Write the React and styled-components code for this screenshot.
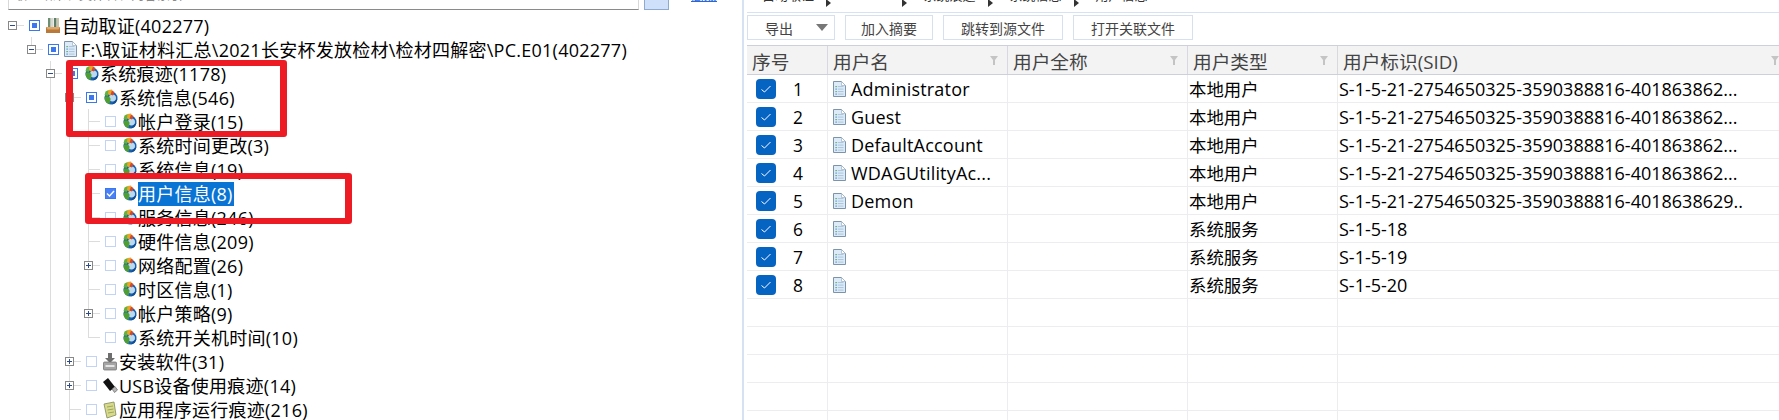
import styled, { createGlobalStyle } from "styled-components";

const GlobalStyle = createGlobalStyle`
  html, body {
    margin: 0;
    padding: 0;
    background: #fff;
    font-family: "Open Sans", "Noto Sans CJK SC", sans-serif;
    color: #000;
  }
`;

const Page = styled.div`
  display: flex;
  width: 1779px;
  height: 420px;
  overflow: hidden;
  position: relative;
`;

const LeftPanel = styled.div`
  width: 742px;
  flex: none;
`;

const SearchBar = styled.div`
  display: flex;
  height: 10px;
  padding-left: 8px;
`;

const SearchInput = styled.div`
  width: 631px;
  height: 10px;
  box-sizing: border-box;
  border-bottom: 1px solid #8a8a8a;
  border-right: 1px solid #d8d8d8;
  border-left: 1px solid #d8d8d8;
  padding-left: 5px;
  overflow: hidden;
  font-size: 13px;
  line-height: 18px;
  color: #8a8a8a;

  span {
    display: block;
    margin-top: -15px;
  }
`;

const SearchButton = styled.div`
  width: 25px;
  height: 10px;
  margin-left: 5px;
  box-sizing: border-box;
  background: #cfe0fa;
  border: 1px solid #8eaacf;
  border-top: 0;
`;

const AdvancedLink = styled.div`
  margin-left: 22px;
  height: 4px;
  overflow: hidden;
  font-size: 13px;
  line-height: 18px;
  color: #2a66d8;
  text-decoration: underline;

  span {
    display: block;
    margin-top: -14px;
  }
`;

const Tree = styled.div`
  padding: 3px 0 0 12px;
`;

const Children = styled.div`
  position: relative;
  margin-left: 19px;

  &::before {
    content: "";
    position: absolute;
    left: 0;
    top: 0;
    width: 1px;
    height: ${(p) => (p.$guide === "full" ? "100%" : p.$guide === "leaf" ? "calc(100% - 12px)" : "12px")};
    background: #dcdcdc;
  }
`;

const Row = styled.div`
  display: flex;
  align-items: center;
  height: 24px;
  font-size: 18px;
  white-space: nowrap;
`;

const Slot = styled.div`
  display: flex;
  align-items: center;
  flex: none;
  width: 21px;
  margin-left: -4px;
`;

const Expander = styled.div`
  position: relative;
  width: 9px;
  height: 9px;
  flex: none;
  box-sizing: border-box;
  border: 1px solid #888;
  background: #fff;
  z-index: 1;

  &::before {
    content: "";
    position: absolute;
    left: 1px;
    top: 3px;
    width: 5px;
    height: 1px;
    background: #2f4a86;
  }

  &::after {
    content: "";
    display: ${(p) => (p.$open ? "none" : "block")};
    position: absolute;
    left: 3px;
    top: 1px;
    width: 1px;
    height: 5px;
    background: #2f4a86;
  }
`;

const Twig = styled.div`
  flex: 1;
  height: 1px;
  margin-left: ${(p) => (p.$bare ? "4px" : "0")};
  margin-right: 5px;
  background: #dcdcdc;
`;

const CheckBox = styled.div`
  display: flex;
  align-items: center;
  justify-content: center;
  flex: none;
  width: 11px;
  height: 11px;
  box-sizing: border-box;
  border: 1px solid ${(p) => (p.$state === "none" ? "#c3d3f5" : "#3b78f0")};
  background: ${(p) => (p.$state === "checked" ? "#4a80f5" : "#fff")};

  &::after {
    content: "";
    display: ${(p) => (p.$state === "partial" ? "block" : "none")};
    width: 5px;
    height: 5px;
    background: #3b78f0;
  }
`;

const NodeIcon = styled.span`
  display: flex;
  flex: none;
  width: 16px;
  height: 16px;
  margin: 0 2px 0 5px;
`;

const Label = styled.span`
  display: block;
  margin-top: 2px;
  margin-left: -1px;
  line-height: 24px;
  padding-right: 1px;
  letter-spacing: 0.25px;
  background: ${(p) => (p.$selected ? "#0a74d4" : "transparent")};
  color: ${(p) => (p.$selected ? "#fff" : "#000")};
`;

const RedBox = styled.div`
  position: absolute;
  left: ${(p) => p.$left}px;
  top: ${(p) => p.$top}px;
  width: ${(p) => p.$width}px;
  height: ${(p) => p.$height}px;
  box-sizing: border-box;
  border: 6px solid #ed1c24;
  border-left-width: 7px;
  border-right-width: 7px;
  border-radius: 3px;
  z-index: 2;
`;

const RightPanel = styled.div`
  flex: 1;
  min-width: 0;
  border-left: 2px solid #d6e2f4;
  padding-left: 3px;
`;

const Breadcrumb = styled.div`
  display: flex;
  height: 12px;
  box-sizing: content-box;
  border-bottom: 1px solid #d6e2f4;
  overflow: hidden;
  padding-left: 15px;
  font-size: 13px;
  line-height: 18px;
  color: #333;
`;

const Crumb = styled.span`
  margin-top: -14px;
  margin-right: 34px;
  position: relative;

  &:not(:last-child)::after {
    content: "";
    position: absolute;
    right: -17px;
    top: 13px;
    border-left: 5px solid #333;
    border-top: 4px solid transparent;
    border-bottom: 4px solid transparent;
  }
`;

const Toolbar = styled.div`
  display: flex;
  gap: 10px;
  height: 25px;
  margin-top: 2px;
`;

const ToolButton = styled.div`
  display: flex;
  align-items: center;
  justify-content: center;
  width: ${(p) => p.$width}px;
  box-sizing: border-box;
  border: 1px solid #d6e0ee;
  font-size: 14px;
  color: #444;
  white-space: nowrap;
`;

const DropButton = styled(ToolButton)`
  justify-content: flex-start;
  padding-left: 17px;

  &::after {
    content: "";
    margin-left: 23px;
    border-top: 7px solid #777;
    border-left: 6px solid transparent;
    border-right: 6px solid transparent;
  }
`;

const Table = styled.div`
  margin-top: 5px;
`;

const GridRow = styled.div`
  display: grid;
  grid-template-columns: 81px 180px 180px 150px 1fr;
`;

const HeaderRow = styled(GridRow)`
  height: 30px;
  box-sizing: border-box;
  background: #f3f3f3;
  border-top: 1px solid #cdd0dc;
  border-bottom: 1px solid #cdd0dc;
`;

const HeaderCell = styled.div`
  position: relative;
  display: flex;
  align-items: center;
  justify-content: space-between;
  padding: 0 1px 0 5px;
  border-right: 1px solid #d8d8de;
  font-size: 18.7px;
  color: #444;
  white-space: nowrap;
  overflow: hidden;

  &:last-child {
    border-right: 0;
    padding-right: 0;
  }
`;

const FilterIcon = styled.svg`
  width: 8px;
  height: 9px;
  flex: none;
  margin: 0 8px 0 0;

  div:last-child > & {
    margin-right: 0;
  }
`;

const BodyRow = styled(GridRow)`
  height: 28px;
  box-sizing: border-box;
  border-bottom: 1px solid #ededf0;
  font-size: 17.4px;
`;

const Cell = styled.div`
  display: flex;
  align-items: center;
  min-width: 0;
  padding-left: 1px;
  font-size: ${(p) => (p.$latin ? "18px" : "inherit")};
  border-right: 1px solid #ededf0;
  white-space: nowrap;
  overflow: hidden;

  &:last-child {
    border-right: 0;
  }
`;

const IndexCell = styled(Cell)`
  padding-left: 9px;
`;

const BlueCheck = styled.div`
  display: flex;
  align-items: center;
  justify-content: center;
  flex: none;
  width: 20px;
  height: 20px;
  border-radius: 4px;
  background: #0563c1;
`;

const IndexNumber = styled.span`
  width: 24px;
  margin-left: 10px;
  text-align: center;
`;

const NameCell = styled(Cell)`
  padding-left: 5px;
  letter-spacing: 0.2px;
`;

const FileGlyph = styled.span`
  display: flex;
  flex: none;
  width: 13px;
  height: 16px;
  margin-right: 5px;
`;

function GlobeIcon() {
  return (
    <svg width="16" height="16" viewBox="0 0 16 16">
      <circle cx="9" cy="9" r="6.5" fill="#1a62b0" />
      <circle cx="10.5" cy="9" r="3.5" fill="#bcd9ee" />
      <path d="M2.6 8 C4.5 6.5 7.5 7 8.5 9.5 C8.8 11.5 7.5 13 7.5 15.2 C4.5 14.5 2.2 11.8 2.6 8Z" fill="#4f9e32" />
      <path d="M3.5 2.5 L6.5 1 L8 4 L5.5 7 L2.5 6Z" fill="#63b23a" />
      <path d="M6.5 1 L10 0.5 L11 4 L8 6.5 L6 5Z" fill="#e8a52a" />
      <path d="M10 1.5 L12.5 3 L11 6.5 L8.5 5.5Z" fill="#d9472a" />
      <path d="M12.5 12 C14 11 15 10.5 15.4 9.5 C15.4 12.5 13 15.5 9.5 15.5 C10.5 14.5 11.5 13.5 12.5 12Z" fill="#0f4d94" />
    </svg>
  );
}

function ToolboxIcon() {
  return (
    <svg width="16" height="18" viewBox="0 0 16 18">
      <rect x="3" y="1" width="2.5" height="10" fill="#6d8f72" />
      <rect x="6" y="1" width="2.5" height="10" fill="#d8d8d0" />
      <rect x="9" y="1" width="2.5" height="10" fill="#5e7d6a" />
      <rect x="12" y="1" width="2" height="10" fill="#c9c3a8" />
      <path d="M1 10 H15 V16 H1Z" fill="#b9793a" />
      <path d="M1 10 H15 L13.5 12.5 H2.5Z" fill="#e0a868" />
    </svg>
  );
}

function DocIcon() {
  return (
    <svg width="13" height="16" viewBox="0 0 13 16">
      <path d="M0.5 0.5 H8.5 L12.5 4.5 V15.5 H0.5Z" fill="#dcebf7" stroke="#7d93ab" />
      <path d="M8.5 0.5 V4.5 H12.5Z" fill="#fff" stroke="#9fb2c6" strokeWidth="0.7" />
      <rect x="2.5" y="5" width="1.2" height="1.2" fill="#3fa34d" />
      <rect x="2.5" y="7.5" width="1.2" height="1.2" fill="#3a7fd0" />
      <rect x="2.5" y="10" width="1.2" height="1.2" fill="#3fa34d" />
      <rect x="2.5" y="12.5" width="1.2" height="1.2" fill="#3a7fd0" />
      <path d="M4.8 5.6 H10.5 M4.8 8.1 H10.5 M4.8 10.6 H10.5 M4.8 13.1 H10.5" stroke="#a9c4dc" strokeWidth="1" />
    </svg>
  );
}

function InstallIcon() {
  return (
    <svg width="16" height="18" viewBox="0 0 16 18">
      <path d="M6 0 H10 V5 H13 L8 10 L3 5 H6Z" fill="#6e6e6e" />
      <rect x="1.5" y="9" width="13" height="8" rx="1" fill="#a5a5a5" stroke="#6a6a6a" strokeWidth="0.7" />
      <rect x="3.5" y="12" width="9" height="2" fill="#e4e4e4" />
    </svg>
  );
}

function UsbIcon() {
  return (
    <svg width="16" height="18" viewBox="0 0 16 18">
      <path d="M1 5 L6 1 L13 10 L8 14Z" fill="#111" />
      <path d="M10 12 L13 9.5 L15.5 13 L12.5 15.5Z" fill="#b5b5b5" stroke="#555" strokeWidth="0.6" />
    </svg>
  );
}

function NoteIcon() {
  return (
    <svg width="16" height="18" viewBox="0 0 16 18">
      <path d="M2 3 L12 1 L14 14 L5 17 Z" fill="#d9d98a" stroke="#7c8a5a" strokeWidth="0.8" />
      <path d="M5 6 L11 5 M5.5 9 L11.5 8 M6 12 L12 11" stroke="#8a9a5a" strokeWidth="0.8" />
    </svg>
  );
}

const nodeIcons = {
  globe: GlobeIcon,
  toolbox: ToolboxIcon,
  doc: DocIcon,
  install: InstallIcon,
  usb: UsbIcon,
  note: NoteIcon,
};

function TreeNode({ icon = "globe", label, state = "none", toggle, selected }) {
  const Icon = nodeIcons[icon];
  return (
    <Row>
      <Slot>
        {toggle ? <Expander $open={toggle === "open"} /> : null}
        <Twig $bare={!toggle} />
      </Slot>
      <CheckBox $state={state}>
        {state === "checked" ? (
          <svg width="9" height="7" viewBox="0 0 9 7">
            <path d="M1 3.5 L3.5 6 L8 1" fill="none" stroke="#fff" strokeWidth="1.4" />
          </svg>
        ) : null}
      </CheckBox>
      <NodeIcon>
        <Icon />
      </NodeIcon>
      <Label $selected={selected}>{label}</Label>
    </Row>
  );
}

const systemInfoChildren = [
  { label: "帐户登录(15)" },
  { label: "系统时间更改(3)" },
  { label: "系统信息(19)" },
  { label: "用户信息(8)", state: "checked", selected: true },
  { label: "服务信息(246)" },
  { label: "硬件信息(209)" },
  { label: "网络配置(26)", toggle: "closed" },
  { label: "时区信息(1)" },
  { label: "帐户策略(9)", toggle: "closed" },
  { label: "系统开关机时间(10)" },
];

const SID = "S-1-5-21-2754650325-3590388816-401863862...";

const users = [
  { name: "Administrator", type: "本地用户", sid: SID },
  { name: "Guest", type: "本地用户", sid: SID },
  { name: "DefaultAccount", type: "本地用户", sid: SID },
  { name: "WDAGUtilityAc...", type: "本地用户", sid: SID },
  { name: "Demon", type: "本地用户", sid: "S-1-5-21-2754650325-3590388816-4018638629.." },
  { name: "", type: "系统服务", sid: "S-1-5-18" },
  { name: "", type: "系统服务", sid: "S-1-5-19" },
  { name: "", type: "系统服务", sid: "S-1-5-20" },
];

const crumbs = ["自动取证", "PC.E01", "系统痕迹", "系统信息", "用户信息"];

function Filter() {
  return (
    <FilterIcon viewBox="0 0 8 9">
      <path d="M0 0 H8 L5 4 V9 H3 V4Z" fill="#c4c4c4" />
    </FilterIcon>
  );
}

function App() {
  return (
    <>
      <GlobalStyle />
      <Page>
        <LeftPanel>
          <SearchBar>
            <SearchInput>
              <span>取证结果、文件名、内容索引</span>
            </SearchInput>
            <SearchButton />
            <AdvancedLink>
              <span>高级</span>
            </AdvancedLink>
          </SearchBar>
          <Tree>
            <TreeNode icon="toolbox" label="自动取证(402277)" state="partial" toggle="open" />
            <Children $guide="stub">
              <TreeNode icon="doc" label="F:\取证材料汇总\2021长安杯发放检材\检材四解密\PC.E01(402277)" state="partial" toggle="open" />
              <Children $guide="full">
                <TreeNode label="系统痕迹(1178)" state="partial" toggle="open" />
                <Children $guide="full">
                  <TreeNode label="系统信息(546)" state="partial" toggle="open" />
                  <Children $guide="leaf">
                    {systemInfoChildren.map((node) => (
                      <TreeNode key={node.label} {...node} />
                    ))}
                  </Children>
                  <TreeNode icon="install" label="安装软件(31)" toggle="closed" />
                  <TreeNode icon="usb" label="USB设备使用痕迹(14)" toggle="closed" />
                  <TreeNode icon="note" label="应用程序运行痕迹(216)" />
                </Children>
              </Children>
            </Children>
          </Tree>
        </LeftPanel>
        <RightPanel>
          <Breadcrumb>
            {crumbs.map((c) => (
              <Crumb key={c}>{c}</Crumb>
            ))}
          </Breadcrumb>
          <Toolbar>
            <DropButton $width={88}>导出</DropButton>
            <ToolButton $width={88}>加入摘要</ToolButton>
            <ToolButton $width={120}>跳转到源文件</ToolButton>
            <ToolButton $width={120}>打开关联文件</ToolButton>
          </Toolbar>
          <Table>
            <HeaderRow>
              <HeaderCell>序号</HeaderCell>
              <HeaderCell>用户名<Filter /></HeaderCell>
              <HeaderCell>用户全称<Filter /></HeaderCell>
              <HeaderCell>用户类型<Filter /></HeaderCell>
              <HeaderCell>用户标识(SID)<Filter /></HeaderCell>
            </HeaderRow>
            {users.map((u, i) => (
              <BodyRow key={i}>
                <IndexCell>
                  <BlueCheck>
                    <svg width="12" height="10" viewBox="0 0 12 10">
                      <path d="M1.5 5.5 L4.5 8 L10.5 2" fill="none" stroke="#fff" strokeWidth="1" />
                    </svg>
                  </BlueCheck>
                  <IndexNumber>{i + 1}</IndexNumber>
                </IndexCell>
                <NameCell $latin>
                  <FileGlyph>
                    <DocIcon />
                  </FileGlyph>
                  {u.name}
                </NameCell>
                <Cell />
                <Cell>{u.type}</Cell>
                <Cell $latin>{u.sid}</Cell>
              </BodyRow>
            ))}
            {[0, 1, 2, 3, 4].map((n) => (
              <BodyRow key={n}>
                <Cell />
                <Cell />
                <Cell />
                <Cell />
                <Cell />
              </BodyRow>
            ))}
          </Table>
        </RightPanel>
        <RedBox $left={66} $top={60} $width={221} $height={77} />
        <RedBox $left={85} $top={173} $width={267} $height={51} />
      </Page>
    </>
  );
}

export default App;
